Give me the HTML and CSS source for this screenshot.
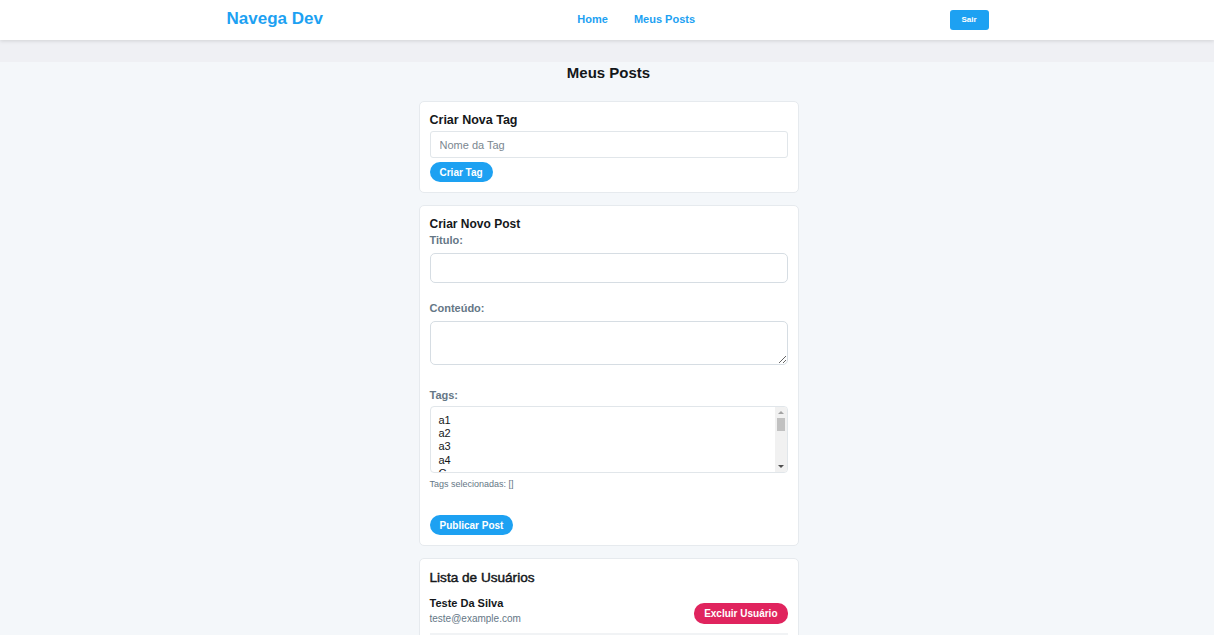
FILE: index.html
```html
<!DOCTYPE html>
<html lang="pt-BR">
<head>
<meta charset="utf-8">
<title>Navega Dev</title>
<link rel="stylesheet" href="styles.css">
</head>
<body>
<header class="topbar">
  <div class="topbar-inner">
    <a class="logo" href="#">Navega Dev</a>
    <nav class="nav">
      <a href="#">Home</a>
      <a href="#">Meus Posts</a>
    </nav>
    <button class="btn-logout">Sair</button>
  </div>
</header>
<main class="main">
  <h2 class="page-title">Meus Posts</h2>
  <div class="column">
    <section class="card">
      <h3 class="card-title">Criar Nova Tag</h3>
      <input class="input input-tag" type="text" placeholder="Nome da Tag">
      <button class="btn-pill">Criar Tag</button>
    </section>

    <section class="card">
      <h3 class="card-title small">Criar Novo Post</h3>
      <div class="group">
        <label class="label">Titulo:</label>
        <input class="input input-title" type="text">
      </div>
      <div class="group tall">
        <label class="label">Conteúdo:</label>
        <textarea class="input textarea"></textarea>
      </div>
      <div class="group last">
        <label class="label tight">Tags:</label>
        <div class="select-wrap">
          <select class="input select" multiple>
            <option>a1</option>
            <option>a2</option>
            <option>a3</option>
            <option>a4</option>
            <option>C</option>
            <option>CSS</option>
            <option>HTML</option>
            <option>Java</option>
            <option>JavaScript</option>
            <option>Python</option>
            <option>React</option>
            <option>SQL</option>
            <option>TypeScript</option>
            <option>Go</option>
            <option>Rust</option>
            <option>Kotlin</option>
            <option>Node</option>
            <option>Vue</option>
          </select>
          <span class="fake-scroll" aria-hidden="true">
            <span class="arrow up"></span>
            <span class="track"><span class="thumb"></span></span>
            <span class="arrow down"></span>
          </span>
        </div>
        <p class="hint">Tags selecionadas: []</p>
      </div>
      <button class="btn-pill">Publicar Post</button>
    </section>

    <section class="card">
      <h3 class="card-title big">Lista de Usuários</h3>
      <div class="user-row">
        <div class="user-info">
          <span class="user-name">Teste Da Silva</span>
          <span class="user-email">teste@example.com</span>
        </div>
        <button class="btn-danger">Excluir Usuário</button>
      </div>
      <div class="user-row">
        <div class="user-info">
          <span class="user-name">Maria Souza</span>
          <span class="user-email">maria@example.com</span>
        </div>
        <button class="btn-danger">Excluir Usuário</button>
      </div>
    </section>
  </div>
</main>
</body>
</html>
```

FILE: styles.css
```css
* { box-sizing: border-box; }

html, body {
  margin: 0;
  padding: 0;
}

body {
  background: #eff0f4;
  font-family: "Liberation Sans", Arial, Helvetica, sans-serif;
  color: #14171a;
}

.topbar {
  background: #ffffff;
  height: 40px;
  box-shadow: 0 1px 4px rgba(0, 0, 0, 0.13);
  position: relative;
  z-index: 2;
}

.topbar-inner {
  width: 763px;
  margin: 0 auto;
  padding-left: 1px;
  height: 40px;
  display: flex;
  align-items: center;
  justify-content: space-between;
}

.logo {
  color: #1da1f2;
  font-weight: bold;
  font-size: 17px;
  text-decoration: none;
  margin-top: -3px;
}

.nav {
  display: flex;
  gap: 26px;
  margin-top: -3px;
}

.nav a {
  color: #1da1f2;
  font-weight: bold;
  font-size: 11px;
  text-decoration: none;
}

.btn-logout {
  background: #1da1f2;
  color: #fff;
  border: none;
  border-radius: 3px;
  font-family: inherit;
  font-weight: bold;
  font-size: 8px;
  width: 39px;
  height: 20px;
  padding: 0;
  margin-top: -1px;
}

.main {
  margin-top: 22px;
  background: #f4f7fa;
  min-height: 600px;
  padding-top: 1px;
  padding-left: 3px;
}

.page-title {
  margin: 0;
  text-align: center;
  font-size: 15px;
  line-height: 20px;
  font-weight: bold;
  color: #14171a;
}

.column {
  width: 380px;
  margin: 18px auto 0;
  display: flex;
  flex-direction: column;
  gap: 12px;
}

.card {
  background: #ffffff;
  border: 1px solid #e6eaee;
  border-radius: 5px;
  padding: 10px;
}

.card-title {
  margin: 0 0 3px;
  font-size: 12.5px;
  line-height: 16px;
  font-weight: bold;
}

.card-title.small {
  font-size: 12px;
  margin-bottom: 1px;
}

.card-title.big {
  font-size: 13.6px;
  font-weight: normal;
  -webkit-text-stroke: 0.45px #14171a;
  margin: 1px 0 10px;
}

.input {
  display: block;
  width: 100%;
  border: 1px solid #e1e6ea;
  border-radius: 3px;
  background: #fff;
  font-family: inherit;
  color: #14171a;
  outline: none;
}

.input-tag {
  height: 27px;
  padding: 0 9px;
  font-size: 11px;
  margin-bottom: 4px;
}

.input-tag::placeholder {
  color: #7b8790;
}

.input-title {
  height: 30px;
  border-radius: 5px;
  border-color: #d6dde3;
}

.textarea {
  height: 44px;
  border-radius: 5px;
  border-color: #d6dde3;
  resize: vertical;
}

.select-wrap {
  position: relative;
}

.select {
  height: 67px;
  border-radius: 4px;
  padding: 7px 14px 0 8px;
  font-size: 11px;
  border-color: #e1e6ea;
  overflow-y: hidden;
}

.select option {
  padding: 0;
}

.fake-scroll {
  position: absolute;
  top: 1px;
  right: 1px;
  bottom: 1px;
  width: 12px;
  background: #f1f1f1;
  border-radius: 0 3px 3px 0;
  display: flex;
  flex-direction: column;
}

.fake-scroll .arrow {
  height: 11px;
  display: flex;
  align-items: center;
  justify-content: center;
}

.fake-scroll .arrow::before {
  content: "";
  width: 0;
  height: 0;
  border-left: 3px solid transparent;
  border-right: 3px solid transparent;
}

.fake-scroll .arrow.up::before {
  border-bottom: 3px solid #a3a3a3;
}

.fake-scroll .arrow.down::before {
  border-top: 3px solid #505050;
}

.fake-scroll .track {
  flex: 1;
  padding: 0 2px;
}

.fake-scroll .thumb {
  display: block;
  height: 13px;
  background: #c1c1c1;
}

.group {
  margin-bottom: 18px;
}

.group.tall {
  margin-bottom: 23px;
}

.group.last {
  margin-bottom: 25px;
}

.label {
  display: block;
  color: #657786;
  font-weight: bold;
  font-size: 11px;
  line-height: 14px;
  margin-bottom: 6px;
}

.label.tight {
  margin-bottom: 4px;
}

.hint {
  margin: 5px 0 0;
  font-size: 9px;
  line-height: 12px;
  color: #657786;
}

.btn-pill {
  display: block;
  background: #1da1f2;
  color: #fff;
  border: none;
  border-radius: 10px;
  height: 20px;
  padding: 0 10px;
  font-family: inherit;
  font-weight: bold;
  font-size: 10px;
}

.user-row {
  display: flex;
  align-items: center;
  justify-content: space-between;
  padding-bottom: 7px;
  border-bottom: 2px solid #f1f3f5;
  margin-bottom: 8px;
}

.user-info {
  display: flex;
  flex-direction: column;
}

.user-name {
  font-weight: bold;
  font-size: 11px;
  line-height: 15px;
}

.user-email {
  font-size: 10px;
  line-height: 15px;
  color: #657786;
}

.btn-danger {
  background: #e0245e;
  color: #fff;
  border: none;
  border-radius: 10px;
  height: 21px;
  padding: 0 10px;
  font-family: inherit;
  font-weight: bold;
  font-size: 10px;
  margin-top: 4px;
}
```
